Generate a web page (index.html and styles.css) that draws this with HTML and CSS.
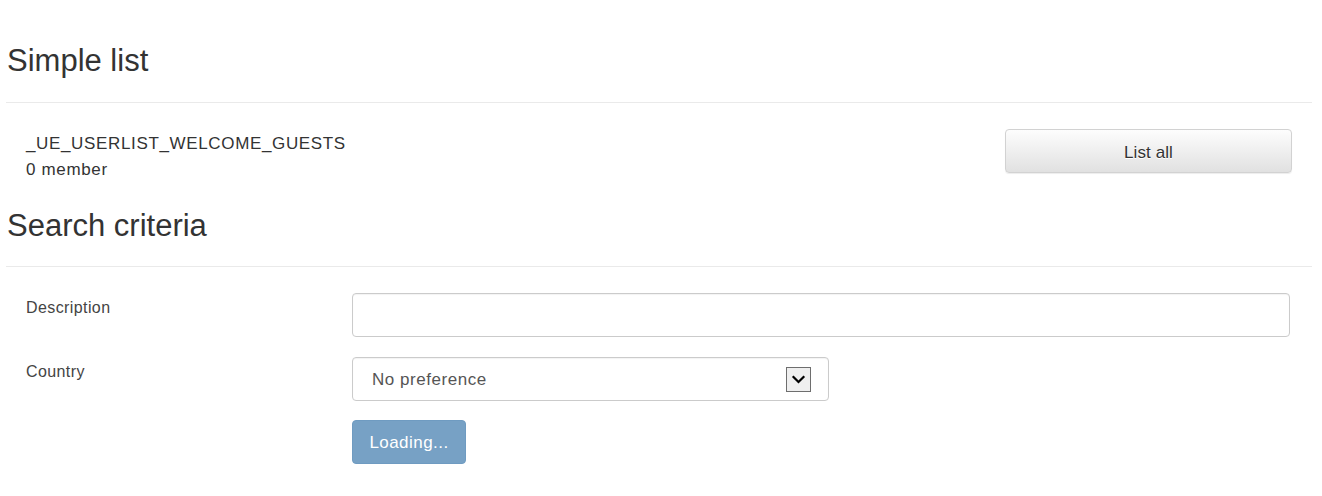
FILE: index.html
```html
<!DOCTYPE html>
<html lang="en">
<head>
<meta charset="utf-8">
<title>Simple list</title>
<link rel="stylesheet" href="styles.css">
</head>
<body>
<div class="page">
  <div class="page-header first">
    <h2 class="title">Simple list</h2>
  </div>
  <div class="list-row">
    <div class="list-info">
      <div>_UE_USERLIST_WELCOME_GUESTS</div>
      <div>0 member</div>
    </div>
    <button class="btn btn-default" type="button">List all</button>
  </div>
  <div class="page-header second">
    <h2 class="title">Search criteria</h2>
  </div>
  <form class="search-form">
    <div class="form-row">
      <label class="control-label">Description</label>
      <input class="form-control text-input" type="text">
    </div>
    <div class="form-row">
      <label class="control-label">Country</label>
      <div class="form-control select-box">
        <span class="select-value">No preference</span>
        <span class="select-arrow">
          <svg width="25" height="25" viewBox="0 0 25 25">
            <rect x="0.5" y="0.5" width="24" height="24" fill="#efefef" stroke="#6e6e6e"/>
            <path d="M7.5 10 L12.5 15 L17.5 10" fill="none" stroke="#000" stroke-width="2.2" stroke-linecap="square"/>
          </svg>
        </span>
      </div>
    </div>
    <div class="form-row">
      <span></span>
      <div><button class="btn btn-primary" type="button">Loading...</button></div>
    </div>
  </form>
</div>
</body>
</html>
```
FILE: styles.css
```css
html, body {
  margin: 0;
  padding: 0;
  background: #fff;
}
body {
  font-family: "Liberation Sans", Arial, sans-serif;
  font-size: 17px;
  line-height: 24px;
  color: #333;
}
.page {
  margin-left: 6px;
  width: 1306px;
}
.page-header {
  border-bottom: 1px solid #eaeaea;
  padding-bottom: 24px;
}
.page-header.first {
  margin-top: 44px;
}
.page-header.second {
  margin-top: 26px;
  padding-bottom: 23px;
}
.title {
  margin: 0;
  padding-left: 1px;
  font-size: 31px;
  font-weight: normal;
  line-height: 34px;
  color: #333;
}
.list-row {
  margin-top: 26px;
  padding: 0 20px;
  display: flex;
  justify-content: space-between;
  align-items: flex-start;
}
.list-info {
  padding-top: 2px;
  line-height: 26px;
  color: #333;
  letter-spacing: 0.65px;
}
.btn {
  font-family: "Liberation Sans", Arial, sans-serif;
  font-size: 17px;
  height: 44px;
  border-radius: 4px;
  cursor: pointer;
  padding: 0 10px;
}
.btn-default {
  width: 287px;
  padding-top: 3px;
  color: #333;
  letter-spacing: 0.1px;
  background: linear-gradient(to bottom, #fdfdfd 0%, #e1e1e1 100%);
  border: 1px solid #d2d2d2;
  text-shadow: 0 1px 0 #fff;
  box-shadow: inset 0 1px 0 rgba(255,255,255,.15), 0 1px 1px rgba(0,0,0,.075);
}
.btn-primary {
  width: 114px;
  padding-top: 1px;
  color: #fff;
  letter-spacing: 0.45px;
  background: #77a1c5;
  border: 1px solid #6f9bc1;
}
.search-form {
  margin-top: 26px;
  padding-left: 20px;
  display: flex;
  flex-direction: column;
  gap: 20px;
}
.form-row {
  display: grid;
  grid-template-columns: 326px 938px;
  align-items: start;
}
.control-label {
  font-size: 16px;
  line-height: 20px;
  padding-top: 5px;
  color: #444;
  letter-spacing: 0.4px;
}
.form-control {
  box-sizing: border-box;
  height: 44px;
  border: 1px solid #cbcbcb;
  border-radius: 4px;
  background: #fff;
  box-shadow: inset 0 1px 1px rgba(0,0,0,.05);
}
.text-input {
  width: 938px;
  font: inherit;
  padding: 0 12px;
  margin: 0;
}
.select-box {
  width: 477px;
  display: flex;
  align-items: center;
  justify-content: space-between;
  padding: 0 17px 0 19px;
  color: #555;
  letter-spacing: 0.55px;
}
.select-value {
  padding-top: 2px;
}
.select-arrow {
  display: flex;
  padding-top: 1px;
}
.form-row:last-child {
  margin-top: -1px;
}
```
